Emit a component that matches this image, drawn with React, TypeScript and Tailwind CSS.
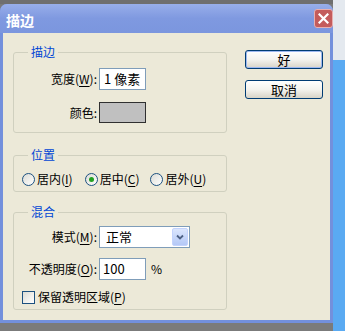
import React from 'react'

const font = { fontFamily: '"Noto Sans CJK SC", "Liberation Sans", sans-serif' }

const U = ({ c }: { c: string }) => <span className="underline underline-offset-[2px]">{c}</span>

const Group = ({ title, className, children }: { title: string; className: string; children: React.ReactNode }) => (
  <div className={`relative border border-[#d0d0bf] rounded-[3px] ${className}`}>
    <span className="absolute -top-[9px] left-[14px] bg-[#ece9d8] px-[3px] text-[12px] leading-[16px] text-[#0046d5]">
      {title}
    </span>
    {children}
  </div>
)

const Radio = ({ checked, children }: { checked?: boolean; children: React.ReactNode }) => (
  <div className="flex items-center gap-[2px]">
    <span className="w-[13px] h-[13px] rounded-full border border-[#1c5180] bg-gradient-to-br from-[#dcdcd5] to-white flex items-center justify-center">
      {checked && <span className="w-[5px] h-[5px] rounded-full bg-[#21a121]" />}
    </span>
    <span>{children}</span>
  </div>
)

const Button = ({ primary, children }: { primary?: boolean; children: React.ReactNode }) => (
  <div
    className={`w-[78px] h-[19px] rounded-[3px] border border-[#003c74] bg-gradient-to-b from-white via-[#f4f3ee] to-[#d8d4c8] flex items-center justify-center text-[13px] leading-none ${
      primary ? 'shadow-[inset_0_0_0_1px_#9db8f0]' : ''
    }`}
  >
    {children}
  </div>
)

export default function App() {
  return (
    <div className="w-[345px] h-[331px] flex bg-[#7b7b7b] overflow-hidden text-black" style={font}>
      <div className="w-[333px] flex flex-col">
        <div className="h-[4px] bg-[#6f6f6f]" />
        <div className="flex-1 flex flex-col bg-[#7390dc] rounded-t-[7px] px-[3px] pb-[3px]">
          {/* title bar */}
          <div className="h-[29px] flex items-center justify-between -mx-[3px] pl-[6px] rounded-t-[7px] bg-gradient-to-b from-[#98aeea] via-[#7f99e0] to-[#7b96de]">
            <span className="text-white font-bold text-[14px] leading-none pt-[3px]">描边</span>
            <div className="w-[19px] h-[19px] rounded-[3px] bg-[#c45c5c] border border-[#e8b0b0] flex items-center justify-center">
              <svg width="11" height="11" viewBox="0 0 11 11">
                <path d="M1.5 1.5 L9.5 9.5 M9.5 1.5 L1.5 9.5" stroke="white" strokeWidth="2.2" strokeLinecap="square" />
              </svg>
            </div>
          </div>
          {/* body */}
          <div className="flex-1 bg-[#ece9d8] flex text-[12px] leading-[14px]">
            <div className="pl-[10px] pt-[19px] w-[224px] flex flex-col">
              <Group title="描边" className="h-[81px] pt-[15px]">
                <div className="flex items-center">
                  <span className="w-[83px] text-right">
                    宽度(<U c="W" />):
                  </span>
                  <div className="ml-[2px] w-[47px] h-[22px] bg-white border border-[#7f9db9] flex items-center pl-[4px] text-[13px]">
                    1 像素
                  </div>
                </div>
                <div className="flex items-center mt-[12px]">
                  <span className="w-[83px] text-right">颜色:</span>
                  <div className="ml-[2px] w-[47px] h-[21px] bg-[#c0c0c0] border border-[#303030]" />
                </div>
              </Group>
              <Group title="位置" className="h-[37px] mt-[22px] pt-[16px] pl-[8px]">
                <div className="flex items-center">
                  <Radio>
                    居内(<U c="I" />)
                  </Radio>
                  <div className="ml-[12px]">
                    <Radio checked>
                      居中(<U c="C" />)
                    </Radio>
                  </div>
                  <div className="ml-[11px]">
                    <Radio>
                      居外(<U c="U" />)
                    </Radio>
                  </div>
                </div>
              </Group>
              <Group title="混合" className="h-[98px] mt-[20px] pt-[13px]">
                <div className="flex items-center">
                  <span className="w-[83px] text-right">
                    模式(<U c="M" />):
                  </span>
                  <div className="ml-[2px] w-[91px] h-[22px] bg-white border border-[#7f9db9] flex items-center justify-between pl-[6px] pr-[1px] text-[13px]">
                    <span>正常</span>
                    <div className="w-[16px] h-[18px] rounded-[2px] bg-gradient-to-b from-[#dbe6fd] to-[#b4c8f6] border border-[#c3d3fd] flex items-center justify-center">
                      <svg width="8" height="6" viewBox="0 0 8 6">
                        <path d="M1 1.5 L4 4.5 L7 1.5" stroke="#4d6185" strokeWidth="1.8" fill="none" />
                      </svg>
                    </div>
                  </div>
                </div>
                <div className="flex items-center mt-[10px]">
                  <span className="w-[83px] text-right">
                    不透明度(<U c="O" />):
                  </span>
                  <div className="ml-[2px] w-[47px] h-[22px] bg-white border border-[#7f9db9] flex items-center pl-[3px] text-[13px]">
                    100
                  </div>
                  <span className="ml-[5px]">%</span>
                </div>
                <div className="flex items-center mt-[10px] pl-[8px]">
                  <span className="w-[13px] h-[13px] border border-[#1c5180] bg-gradient-to-br from-[#dcdcd5] to-white" />
                  <span className="ml-[3px]">
                    保留透明区域(<U c="P" />)
                  </span>
                </div>
              </Group>
            </div>
            <div className="ml-[18px] pt-[17px] flex flex-col gap-[11px]">
              <Button primary>好</Button>
              <Button>取消</Button>
            </div>
          </div>
        </div>
        <div className="h-[8px] bg-[#7b7b7b]" />
      </div>
      <div className="w-[12px] flex flex-col">
        <div className="h-[60px] bg-[#e4e9ef]" />
        <div className="flex-1 bg-[#5aaaf2]" />
      </div>
    </div>
  )
}
